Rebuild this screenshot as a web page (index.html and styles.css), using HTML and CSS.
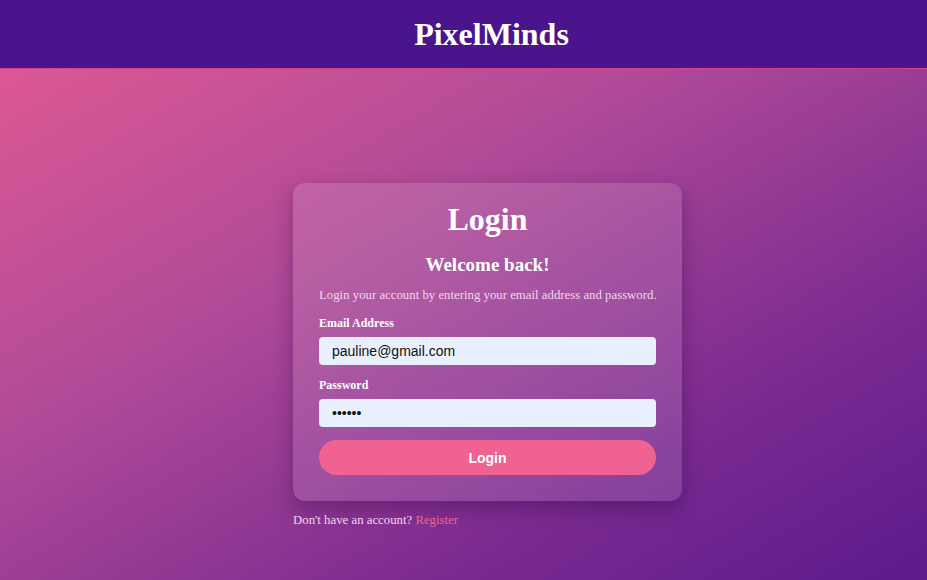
FILE: index.html
```html
<!DOCTYPE html>
<html>
<head>
<meta charset="utf-8">
<link rel="stylesheet" href="styles.css">
</head>
<body>
<header class="topbar">
  <h1 class="brand">PixelMinds</h1>
</header>
<main class="main">
  <div class="wrap">
    <form class="card">
      <h2 class="card-title">Login</h2>
      <h3 class="card-sub">Welcome back!</h3>
      <p class="card-text">Login your account by entering your email address and password.</p>
      <label class="field-label">Email Address</label>
      <input class="field" type="text" value="pauline@gmail.com">
      <label class="field-label">Password</label>
      <input class="field" type="password" value="secret">
      <button class="btn" type="button">Login</button>
    </form>
    <p class="foot">Don't have an account? <a class="link" href="#">Register</a></p>
  </div>
</main>
</body>
</html>
```
FILE: styles.css
```css
* { box-sizing: border-box; }
html, body { margin: 0; height: 100%; }
body {
  font-family: "Liberation Serif", "Times New Roman", serif;
  color: #fff;
  background: linear-gradient(150deg, #e45b93 0%, #b04a98 40%, #7a2a90 75%, #5c1a8c 100%);
  min-height: 580px;
}
.topbar {
  height: 69px;
  background: #4a148c;
  border-bottom: 1px solid #d6408a;
  display: flex;
  align-items: center;
  justify-content: center;
  padding-left: 56px;
}
.brand {
  margin: 0;
  font-size: 32px;
  font-weight: bold;
  color: #fff;
}
.main {
  display: flex;
  justify-content: center;
  padding: 114px 0 0 48px;
}
.wrap { width: 389px; }
.card {
  background: rgba(255, 255, 255, 0.12);
  border-radius: 12px;
  box-shadow: 0 8px 20px rgba(40, 0, 60, 0.35);
  padding: 17px 26px 26px;
  display: flex;
  flex-direction: column;
}
.card-title {
  margin: 0;
  text-align: center;
  font-size: 32px;
  line-height: 38px;
}
.card-sub {
  margin: 15px 0 0;
  text-align: center;
  font-size: 19px;
  line-height: 24px;
}
.card-text {
  margin: 10px 0 0;
  font-size: 12.8px;
  line-height: 16px;
  color: #f3d6ea;
  white-space: nowrap;
}
.field-label {
  margin-top: 13px;
  font-size: 12px;
  font-weight: bold;
  line-height: 15px;
  color: #fff;
}
.field {
  margin-top: 6px;
  height: 28px;
  border: none;
  border-radius: 4px;
  background: #e8f0fe;
  padding: 0 13px;
  font-family: "Liberation Sans", Arial, sans-serif;
  font-size: 14px;
  color: #111;
  outline: none;
}
.btn {
  margin-top: 13px;
  height: 35px;
  border: none;
  border-radius: 18px;
  background: #f06292;
  color: #fff;
  font-family: "Liberation Sans", Arial, sans-serif;
  font-size: 14px;
  font-weight: bold;
}
.foot {
  margin: 12px 0 0;
  font-size: 12.8px;
  color: #f0d6ea;
}
.link { color: #f06292; text-decoration: none; }
```
